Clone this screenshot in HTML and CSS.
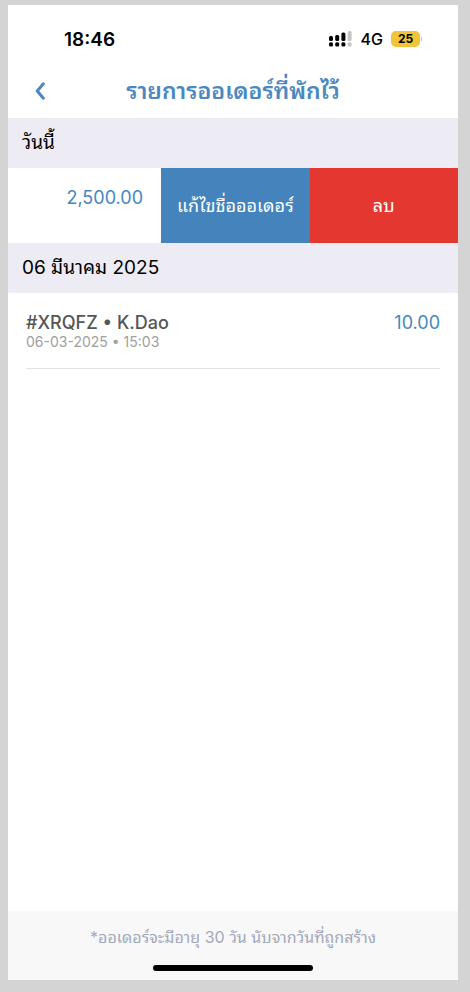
FILE: index.html
```
<!DOCTYPE html>
<html lang="th">
<head>
<meta charset="utf-8">
<meta name="viewport" content="width=device-width, initial-scale=1">
<title>รายการออเดอร์ที่พักไว้</title>
<link rel="stylesheet" href="styles.css">
</head>
<body>
<div class="screen">
  <div class="status">
    <span class="clock">18:46</span>
    <div class="indicators">
      <svg class="signal" width="23" height="16" viewBox="0 0 23 16" aria-hidden="true">
        <g fill="#000">
          <rect x="0" y="5" width="4" height="5" rx="1.5"/>
          <rect x="6.2" y="4" width="4" height="6" rx="1.5"/>
          <rect x="12.4" y="1.5" width="4" height="8.5" rx="1.5"/>
          <rect x="0" y="11.2" width="4" height="4.2" rx="1.5"/>
          <rect x="6.2" y="11.2" width="4" height="4.2" rx="1.5"/>
          <rect x="12.4" y="11.2" width="4" height="4.2" rx="1.5"/>
        </g>
        <g fill="#c4c4c4">
          <rect x="18.6" y="0" width="4" height="10" rx="1.5"/>
          <rect x="18.6" y="11.2" width="4" height="4.2" rx="1.5"/>
        </g>
      </svg>
      <span class="network">4G</span>
      <span class="battery">25</span>
    </div>
  </div>
  <header class="bar">
    <button class="back" type="button" aria-label="กลับ">
      <svg width="12" height="20" viewBox="0 0 12 20" aria-hidden="true"><path d="M9.4 2.8 3.2 10l6.2 7.2" fill="none" stroke="#4a88bf" stroke-width="3" stroke-linecap="round" stroke-linejoin="round"/></svg>
    </button>
    <h1 class="title">รายการออเดอร์ที่พักไว้</h1>
  </header>
  <main class="list">
    <h2 class="section">วันนี้</h2>
    <div class="swiped">
      <span class="amount">2,500.00</span>
      <button class="action edit" type="button">แก้ไขชื่อออเดอร์</button>
      <button class="action delete" type="button">ลบ</button>
    </div>
    <h2 class="section">06 มีนาคม 2025</h2>
    <div class="order">
      <div class="info">
        <span class="name">#XRQFZ • K.Dao</span>
        <span class="date">06-03-2025 • 15:03</span>
      </div>
      <span class="amount">10.00</span>
    </div>
  </main>
  <footer class="note">
    <p class="text">*ออเดอร์จะมีอายุ 30 วัน นับจากวันที่ถูกสร้าง</p>
    <div class="home"></div>
  </footer>
</div>
</body>
</html>
```
FILE: styles.css
```
* {
  box-sizing: border-box;
}

body {
  margin: 0;
  min-height: 100vh;
  display: flex;
  padding: 5px 12px 12px 8px;
  background: #d4d4d4;
  font-family: Inter, Thonburi, "Noto Sans Thai Looped", "Noto Looped Thai", Loma, Garuda, Waree, "Noto Serif Thai", FreeSerif, sans-serif;
  color: #000;
}

h1,
h2,
p {
  margin: 0;
  font-weight: 400;
}

button {
  border: 0;
  padding: 0;
  background: none;
  font-family: inherit;
  cursor: pointer;
}

.screen {
  flex: 1;
  display: flex;
  flex-direction: column;
  background: #fff;
}

.status {
  display: flex;
  align-items: center;
  justify-content: space-between;
  height: 60px;
  padding: 8px 38px 0 56px;
}

.clock {
  font-size: 19px;
  font-weight: 600;
}

.indicators {
  display: flex;
  align-items: center;
}

.network {
  margin: 0 8px 0 9px;
  font-size: 16px;
  font-weight: 500;
}

.battery {
  position: relative;
  width: 29px;
  border-radius: 5px;
  background: #f2c437;
  font-size: 12px;
  font-weight: 700;
  line-height: 16px;
  text-align: center;
}

.battery::after {
  content: "";
  position: absolute;
  top: 6px;
  right: -2px;
  width: 1px;
  height: 4px;
  background: #f2c437;
}

.bar {
  display: grid;
  grid-template-columns: 64px 1fr 64px;
  align-items: center;
  height: 53px;
  padding-bottom: 2px;
}

.back {
  display: flex;
  justify-content: center;
  align-items: center;
  height: 44px;
}

.title {
  color: #4a88bf;
  font-size: 23px;
  font-weight: 600;
  line-height: 32px;
  text-align: center;
  white-space: nowrap;
}

.list {
  flex: 1;
}

.section {
  padding: 0 14px;
  background: #edecf4;
  font-size: 19px;
  line-height: 50px;
}

.swiped {
  display: grid;
  grid-template-columns: 1fr 33% 33%;
  height: 75px;
}

.amount {
  color: #4388be;
  font-size: 18px;
  line-height: 22px;
}

.swiped .amount {
  padding: 19px 18px 0;
  text-align: right;
}

.action {
  color: #fff;
  font-size: 18px;
  line-height: 24px;
  white-space: nowrap;
}

.edit {
  background: #4483bb;
}

.delete {
  background: #e33730;
}

.order {
  display: flex;
  justify-content: space-between;
  height: 76px;
  margin: 0 18px;
  padding-top: 19px;
  border-bottom: 1px solid #e2e2e2;
}

.info {
  display: flex;
  flex-direction: column;
}

.name {
  color: #555;
  font-size: 18px;
  font-weight: 500;
  line-height: 22px;
}

.date {
  color: #a0a0a0;
  font-size: 14px;
  line-height: 16px;
}

.note {
  display: flex;
  flex-direction: column;
  align-items: center;
  justify-content: space-between;
  height: 69px;
  padding: 13px 0 9px;
  background: #f8f8f8;
}

.text {
  color: #a3a8b8;
  font-size: 16px;
  line-height: 26px;
}

.home {
  width: 160px;
  height: 6px;
  border-radius: 3px;
  background: #000;
}
```
